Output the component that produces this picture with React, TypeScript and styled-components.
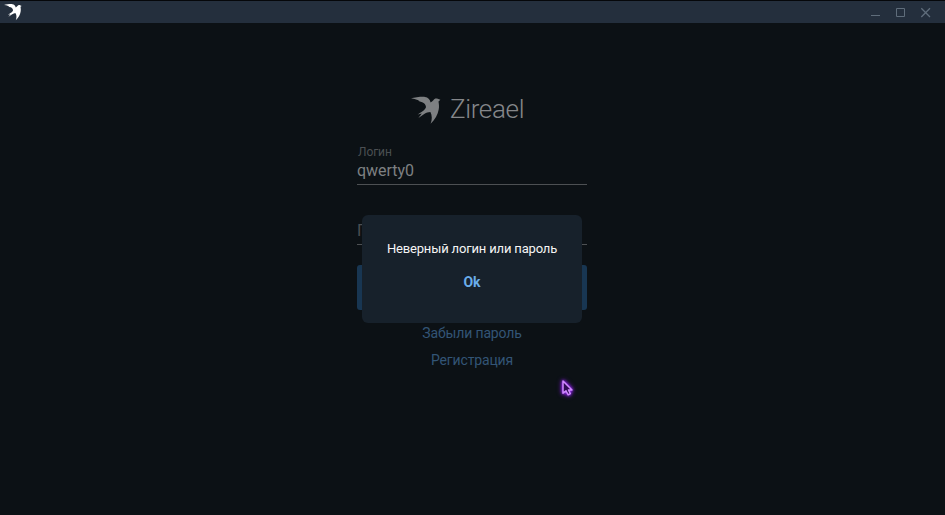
import React from "react";
import styled, { createGlobalStyle } from "styled-components";

const GlobalStyle = createGlobalStyle`
  html, body { margin: 0; background: #0c1115; overflow: hidden; }
  * { box-sizing: border-box; }
  input, button { font: inherit; border: 0; margin: 0; padding: 0; background: none; outline: none; }
`;

const Window = styled.div`
  position: relative;
  display: flex;
  flex-direction: column;
  width: 945px;
  height: 515px;
  background: #0c1115;
  border-top: 1px solid #05070a;
  font-family: Roboto, "Liberation Sans", sans-serif;
`;

const TitleBar = styled.header`
  display: flex;
  align-items: center;
  justify-content: space-between;
  height: 22px;
  padding: 0 15px 0 4px;
  background: #242f3d;
`;

const Controls = styled.div`
  display: flex;
  gap: 15px;
`;

const ControlIcon = styled.svg`
  display: block;
  width: 10px;
  height: 10px;
  overflow: visible;
  fill: none;
  stroke: #5f6d7b;
`;

const Content = styled.main`
  display: flex;
  flex-direction: column;
  align-items: center;
  width: 230px;
  margin: 70px auto 0 357px;
`;

const Brand = styled.h1`
  display: flex;
  align-items: center;
  gap: 9px;
  height: 34px;
  margin: 0;
  align-self: flex-start;
  padding-left: 54px;
  color: #85878a;
  font-size: 26px;
  font-weight: 300;
  letter-spacing: -0.35px;
  line-height: 32px;
`;

const BrandName = styled.span`
  height: 34px;
`;

const BirdSvg = styled.svg<{ $size: number }>`
  display: block;
  flex: none;
  width: ${(p) => p.$size}px;
  height: ${(p) => p.$size}px;
`;

const Field = styled.label`
  display: flex;
  flex-direction: column;
  width: 230px;
  height: 60px;
  padding-top: 18px;
`;

const FieldLabel = styled.span`
  height: 14px;
  padding-left: 1px;
  color: #4b4f52;
  font-size: 12px;
  letter-spacing: -0.1px;
  line-height: 14px;
`;

const FieldInput = styled.input`
  && {
    flex: none;
    width: 100%;
    height: 26px;
    padding-bottom: 3px;
    border-bottom: 1px solid #4d5053;
    color: #7e8082;
    font-size: 16px;
    letter-spacing: -0.05px;
    line-height: 22px;
  }

  &::placeholder { color: #4b4f52; opacity: 1; }
`;

const SubmitButton = styled.button`
  && {
    width: 230px;
    height: 45px;
    margin-top: 18px;
    border-radius: 3px;
    background: #183652;
  }
`;

const Links = styled.nav`
  display: flex;
  flex-direction: column;
  align-items: center;
  margin-top: 10px;
`;

const Link = styled.a`
  height: 27px;
  color: #335576;
  font-size: 14px;
  letter-spacing: -0.14px;
  line-height: 27px;
`;

const Dialog = styled.div`
  position: absolute;
  left: 362px;
  top: 214px;
  display: flex;
  flex-direction: column;
  align-items: center;
  width: 220px;
  height: 108px;
  padding-top: 25px;
  border-radius: 6px;
  background: #17212b;
`;

const Message = styled.p`
  margin: 0;
  color: #f5f5f5;
  font-size: 13px;
  letter-spacing: -0.16px;
  line-height: 18px;
  white-space: nowrap;
`;

const OkButton = styled.button`
  && {
    margin-top: 14px;
    color: #6aade9;
    font-size: 14px;
    font-weight: 700;
    line-height: 20px;
  }
`;

const Pointer = styled.svg`
  position: absolute;
  left: 554px;
  top: 372px;
  width: 26px;
  height: 28px;
  overflow: visible;
  filter: drop-shadow(0 0 1.5px #9a2cf5) drop-shadow(0 0 2px #7a17d0);
`;

function Bird({ size, color }: { size: number; color: string }) {
  return (
    <BirdSvg $size={size} viewBox="0 0 30 30" aria-hidden="true">
      <path
        fill={color}
        d="M0 3.3C4 2.5 9 1.7 14 1.9C17 2.3 18.9 4.2 19.6 7.4C20.6 6.9 21.5 6 22.4 5.2C23.2 3.5 25 3.1 26.7 3.7L29.4 4.8L27.5 6.4C27.9 9 28.3 11.5 27.7 14.5C26.9 19.5 24 24.5 19.6 28.8C21.2 25 21.2 20.5 19.4 17C17 17 15.3 17.7 13.6 18.8L7.4 23L10.8 18.6L6.6 19.5L11.6 16.2C13.6 14.8 14.8 13.4 15 12C14.9 9.6 13.3 8.2 11.2 7.2C9.7 6.5 8.2 6.3 7 5.8L8.4 5.5C6.5 5 5 4.5 3.6 3.9Z"
      />
    </BirdSvg>
  );
}

export default function App() {
  return (
    <>
      <GlobalStyle />
      <Window>
        <TitleBar>
          <Bird size={18} color="#ffffff" />
          <Controls>
            <ControlIcon viewBox="0 0 10 10"><path d="M1 8.5H10" /></ControlIcon>
            <ControlIcon viewBox="0 0 10 10"><path d="M1.5 1.5H9.5V9.5H1.5Z" /></ControlIcon>
            <ControlIcon viewBox="0 0 10 10"><path d="M1.3 1.3L10 10M10 1.3L1.3 10" strokeWidth="1.3" /></ControlIcon>
          </Controls>
        </TitleBar>
        <Content>
          <Brand>
            <Bird size={30} color="#7e8082" />
            <BrandName>Zireael</BrandName>
          </Brand>
          <Field>
            <FieldLabel>Логин</FieldLabel>
            <FieldInput defaultValue="qwerty0" spellCheck={false} />
          </Field>
          <Field>
            <FieldLabel />
            <FieldInput type="password" placeholder="Пароль" />
          </Field>
          <SubmitButton aria-label="Войти" />
          <Links>
            <Link>Забыли пароль</Link>
            <Link>Регистрация</Link>
          </Links>
        </Content>
        <Dialog role="alertdialog">
          <Message>Неверный логин или пароль</Message>
          <OkButton>Ok</OkButton>
        </Dialog>
        <Pointer viewBox="0 0 26 28">
          <path
            d="M9 8V20.2L12 17.8L14.2 21.8L16.3 20.6L14.5 17H18Z"
            fill="#300c55"
            stroke="#d08aff"
            strokeWidth="1.5"
            strokeLinejoin="round"
          />
        </Pointer>
      </Window>
    </>
  );
}
